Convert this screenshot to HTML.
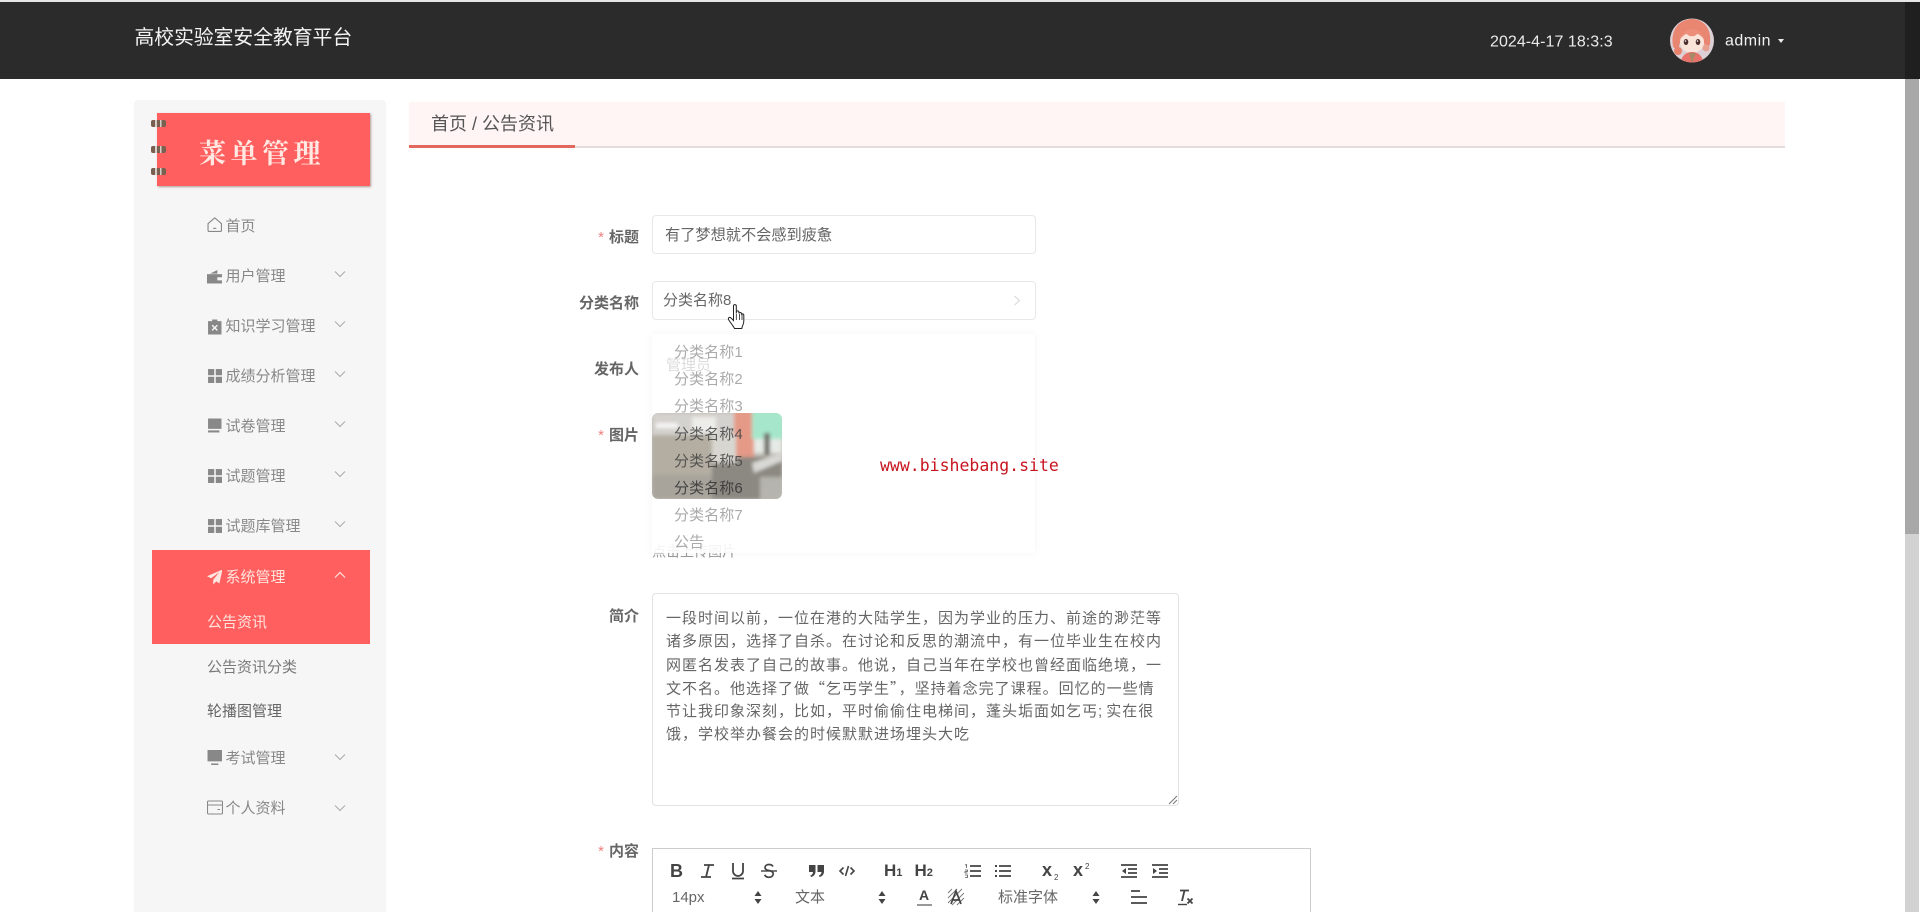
<!DOCTYPE html>
<html lang="zh-CN">
<head>
<meta charset="utf-8">
<title>高校实验室安全教育平台</title>
<style>
*{box-sizing:border-box;margin:0;padding:0}
html,body{width:1920px;height:912px;overflow:hidden;background:#fff}
body{position:relative;font-family:"Liberation Sans","Noto Sans CJK SC",sans-serif;color:#666}
#w{position:absolute;left:0;top:0;width:1920px;height:912px;overflow:hidden;filter:blur(.35px)}
.a{position:absolute;white-space:nowrap}
.c{transform:translateY(-50%);line-height:1.2}
.hdr{left:0;top:2px;width:1920px;height:77px;background:#2b2b2b}
.topline{left:0;top:0;width:1920px;height:2px;background:#e6e6e6}
.side{left:134px;top:100px;width:252px;height:812px;background:#f6f6f6;border-radius:4px 4px 0 0}
.active{left:152px;top:550px;width:218px;height:94px;background:#ff5f5f}
.m{left:225.500px;font-size:15px;color:#888}
.s{left:207px;font-size:15px;color:#666}
.ic{position:absolute;left:206.500px;width:15.500px;height:15.500px;fill:#888}
.ch{position:absolute;left:334px;width:12px;height:8px;fill:none;stroke:#aaa;stroke-width:1}
.tab{left:409px;top:102px;width:1376px;height:46px;background:#fff5f5;border-bottom:2px solid #e6dcdc}
.tabon{left:409px;top:145px;width:166px;height:3px;background:#e2675c}
.lb{font-size:15px;font-weight:bold;color:#666;right:1281px}
.st{color:#f08080;font-weight:normal;margin-right:5px}
.inp{background:#fff;border:1px solid #e8e8e8;border-radius:4px}
.dd{left:652px;top:334px;width:383px;height:219px;background:rgba(255,255,255,.72);box-shadow:0 0 8px rgba(0,0,0,.05);border-radius:2px}
.di{left:674px;font-size:15px;letter-spacing:.1px;color:#8a8a8a;opacity:.72}
.tl{left:666px;font-size:15px;letter-spacing:1px;color:#666}
.q{font-family:"Noto Sans CJK SC",sans-serif}
.ti{position:absolute;overflow:visible}
.tb{font-size:15px;color:#666}
.x{font:bold 18px/18px 'Liberation Sans',sans-serif;color:#444}
.x span{font-size:8px;font-weight:normal;position:absolute;left:12px}
</style>
</head>
<body>
<div id="w">
<div class="a topline"></div>
<div class="a hdr"></div>
<div class="a c" style="left:134.500px;top:39px;font-size:19.800px;color:#f4f4f4">高校实验室安全教育平台</div>
<div class="a c" style="left:1490px;top:42px;font-size:16px;letter-spacing:.05px;color:#eaeaea">2024-4-17 18:3:3</div>
<svg class="a" style="left:1670px;top:18px" width="44" height="45" viewBox="0 0 44 45">
<defs><clipPath id="av"><circle cx="22" cy="22.500" r="22"/></clipPath></defs>
<g clip-path="url(#av)">
<rect width="44" height="45" fill="#dcd0d6"/>
<path d="M3 28C0 10 11 1 22 1s20 9 18 25c-1 3-3 3-5 2-2-8-6-12-13-12s-12 5-13 13c-2 2-5 2-6-1z" fill="#e88672"/>
<ellipse cx="22" cy="24" rx="12" ry="11" fill="#fae4da"/>
<path d="M10 21c3-7 7-10 12-10s9 3 12 10c-3-3-5-5-7-5-2 3-8 3-10 0-2 0-4 2-7 5z" fill="#ec8e7a"/>
<ellipse cx="16" cy="24" rx="2.300" ry="3" fill="#4a2c2c"/><ellipse cx="28" cy="24" rx="2.300" ry="3" fill="#4a2c2c"/>
<circle cx="15.500" cy="23" r=".8" fill="#fff"/><circle cx="27.500" cy="23" r=".8" fill="#fff"/>
<path d="M11 45c0-7 5-11 11-11s11 4 11 11z" fill="#e8736a"/>
<path d="M19 35l3 10 4-10z" fill="#a88a66"/>
<circle cx="8" cy="33" r="4" fill="#e8826e"/><circle cx="36" cy="30" r="3.500" fill="#e8a090"/>
</g></svg>
<div class="a c" style="left:1725px;top:41px;font-size:16px;letter-spacing:.5px;color:#f0f0f0">admin</div>
<div class="a" style="left:1778px;top:39px;width:0;height:0;border-left:3.500px solid transparent;border-right:3.500px solid transparent;border-top:4px solid #eee"></div>

<!-- scrollbar -->
<div class="a" style="left:1905px;top:2px;width:15px;height:77px;background:#1f1f1f"></div>
<div class="a" style="left:1905px;top:79px;width:14px;height:455px;background:#a8a8a8"></div>
<div class="a" style="left:1905px;top:534px;width:14px;height:378px;background:#d2d2d2"></div>

<!-- sidebar -->
<div class="a side"></div>
<div class="a" style="left:157px;top:113px;width:213px;height:73px;background:#ff5f5f;box-shadow:1px 1px 2px rgba(120,80,80,.55)"></div>
<svg class="a" style="left:150px;top:117px" width="18" height="60" viewBox="0 0 18 60">
<g fill="#7a6050"><rect x="1" y="3" width="15" height="7" rx="2"/><rect x="1" y="29" width="15" height="7" rx="2"/><rect x="1" y="51" width="15" height="7" rx="2"/></g>
<g fill="#d8cfc8"><rect x="5" y="3" width="2" height="7"/><rect x="5" y="29" width="2" height="7"/><rect x="5" y="51" width="2" height="7"/><rect x="10" y="3" width="1.500" height="7"/><rect x="10" y="29" width="1.500" height="7"/><rect x="10" y="51" width="1.500" height="7"/></g>
</svg>
<div class="a c" style="left:199px;top:152px;font-size:27px;font-weight:bold;letter-spacing:4.500px;color:#ffe9e2;font-family:'Noto Serif CJK SC','Liberation Serif',serif">菜单管理</div>

<svg class="ic" style="top:217px;fill:none;stroke:#888;stroke-width:1.100" viewBox="0 0 15 15"><path d="M1 6.500L7.500 .8 14 6.500V13a1 1 0 0 1-1 1H2a1 1 0 0 1-1-1z"/><path d="M6 11h3"/></svg>
<div class="a c m" style="top:227px">首页</div>

<svg class="ic" style="top:269px" viewBox="0 0 15 15"><path d="M0 5h15v9H0z"/><path d="M3 4.500L10 1v3.500z"/><rect x="10" y="8" width="5" height="3" fill="#f6f6f6"/></svg>
<div class="a c m" style="top:277px">用户管理</div>
<svg class="ch" style="top:270px" viewBox="0 0 12 8"><path d="M1 1.500l5 5 5-5"/></svg>

<svg class="ic" style="top:319px" viewBox="0 0 15 15"><path d="M1 2h4V.5h5V2h4v13H1z"/><path d="M5 6l5 5M10 6l-5 5" stroke="#f6f6f6" stroke-width="1.400"/></svg>
<div class="a c m" style="top:327px">知识学习管理</div>
<svg class="ch" style="top:320px" viewBox="0 0 12 8"><path d="M1 1.500l5 5 5-5"/></svg>

<svg class="ic" style="top:368px" viewBox="0 0 15 15"><rect x="1" y="1" width="6" height="6"/><rect x="8.500" y="1" width="6" height="6"/><rect x="1" y="8.500" width="6" height="6"/><rect x="8.500" y="8.500" width="6" height="6"/></svg>
<div class="a c m" style="top:377px">成绩分析管理</div>
<svg class="ch" style="top:370px" viewBox="0 0 12 8"><path d="M1 1.500l5 5 5-5"/></svg>

<svg class="ic" style="top:418px" viewBox="0 0 15 15"><path d="M1 .5h13v10H1z"/><path d="M1 12h11v2H1z"/></svg>
<div class="a c m" style="top:427px">试卷管理</div>
<svg class="ch" style="top:420px" viewBox="0 0 12 8"><path d="M1 1.500l5 5 5-5"/></svg>

<svg class="ic" style="top:468px" viewBox="0 0 15 15"><rect x="1" y="1" width="6" height="6"/><rect x="8.500" y="1" width="6" height="6"/><rect x="1" y="8.500" width="6" height="6"/><rect x="8.500" y="8.500" width="6" height="6"/></svg>
<div class="a c m" style="top:477px">试题管理</div>
<svg class="ch" style="top:470px" viewBox="0 0 12 8"><path d="M1 1.500l5 5 5-5"/></svg>

<svg class="ic" style="top:518px" viewBox="0 0 15 15"><rect x="1" y="1" width="6" height="6"/><rect x="8.500" y="1" width="6" height="6"/><rect x="1" y="8.500" width="6" height="6"/><rect x="8.500" y="8.500" width="6" height="6"/></svg>
<div class="a c m" style="top:527px">试题库管理</div>
<svg class="ch" style="top:520px" viewBox="0 0 12 8"><path d="M1 1.500l5 5 5-5"/></svg>

<div class="a active"></div>
<svg class="ic" style="top:569px;fill:#ffe6e0" viewBox="0 0 15 15"><path d="M15 .5L0 7l4 2 8-6-6 7.500V15l3-3 3 2z"/></svg>
<div class="a c m" style="top:577.500px;color:#ffe3dc">系统管理</div>
<svg class="ch" style="top:571px;stroke:#ffe3dc;stroke-width:1.200" viewBox="0 0 12 8"><path d="M1 6.500l5-5 5 5"/></svg>
<div class="a c s" style="top:623px;color:#ffe3dc">公告资讯</div>
<div class="a c s" style="top:667.500px;color:#7a7a7a">公告资讯分类</div>
<div class="a c s" style="top:711.500px">轮播图管理</div>

<svg class="ic" style="top:750px" viewBox="0 0 15 15"><path d="M.5 0h14v11H.5z"/><path d="M4 13h7v1.500H4z"/></svg>
<div class="a c m" style="top:759px">考试管理</div>
<svg class="ch" style="top:753px" viewBox="0 0 12 8"><path d="M1 1.500l5 5 5-5"/></svg>

<svg class="ic" style="top:800px;width:16px;height:15px;fill:none;stroke:#888;stroke-width:1.100" viewBox="0 0 16 15"><rect x=".5" y="1" width="15" height="13" rx="1"/><path d="M.5 5h15M10.500 9.500h2.500"/></svg>
<div class="a c m" style="top:809px">个人资料</div>
<svg class="ch" style="top:804px" viewBox="0 0 12 8"><path d="M1 1.500l5 5 5-5"/></svg>

<!-- tab -->
<div class="a tab"></div>
<div class="a tabon"></div>
<div class="a c" style="left:431px;top:125px;font-size:18px;color:#555">首页 / 公告资讯</div>

<!-- form -->
<div class="a c lb" style="top:238px"><span class="st">*</span>标题</div>
<div class="a inp" style="left:652px;top:215px;width:384px;height:39px"></div>
<div class="a c" style="left:665px;top:236px;font-size:15.200px;color:#666">有了梦想就不会感到疲惫</div>

<div class="a c lb" style="top:304px">分类名称</div>
<div class="a inp" style="left:652px;top:281px;width:384px;height:39px"></div>
<div class="a c" style="left:663px;top:301px;font-size:15px;color:#666">分类名称8</div>
<svg class="a" style="left:1013px;top:295px" width="8" height="11" viewBox="0 0 8 11"><path d="M1.500 1l5 4.500-5 4.500" fill="none" stroke="#ddd" stroke-width="1.200"/></svg>

<div class="a c lb" style="top:370px">发布人</div>

<div class="a c lb" style="top:436px"><span class="st">*</span>图片</div>
<div class="a c" style="left:652px;top:552px;font-size:14px;color:#999">点击上传图片</div>

<!-- dropdown -->
<div class="a dd"></div>
<div class="a" style="left:652px;top:545px;width:383px;height:8px;background:rgba(255,255,255,.6)"></div>
<div class="a c" style="left:666px;top:366px;font-size:15px;color:#dcdcdc">管理员</div>
<svg class="a" style="left:652px;top:413px;border-radius:6px" width="130" height="86" viewBox="0 0 130 86">
<defs><filter id="b" x="-20%" y="-20%" width="140%" height="140%"><feGaussianBlur stdDeviation="1.800"/></filter><clipPath id="ph"><rect width="130" height="86" rx="6"/></clipPath></defs>
<g clip-path="url(#ph)"><rect width="130" height="86" fill="#c0bcb4"/>
<g filter="url(#b)">
<rect x="0" y="0" width="85" height="22" fill="#d4d2ce"/>
<rect x="4" y="10" width="22" height="5" fill="#f6f6f6"/>
<rect x="40" y="4" width="24" height="16" fill="#ecece8"/>
<rect x="82" y="-2" width="20" height="46" fill="#e49a86"/>
<rect x="100" y="-2" width="32" height="28" fill="#a6e6ca"/>
<rect x="102" y="26" width="28" height="14" fill="#e6eae6"/>
<rect x="0" y="22" width="60" height="64" fill="#b4aea2"/>
<rect x="60" y="44" width="70" height="42" fill="#8c8882"/>
<rect x="60" y="22" width="24" height="28" fill="#d8d6d0"/>
<rect x="0" y="62" width="60" height="24" fill="#a8a49c"/>
<path d="M100 50L130 40v8L102 60z" fill="#d8d8d4"/>
<rect x="108" y="64" width="22" height="22" fill="#b6b4ae"/>
<rect x="112" y="20" width="6" height="22" fill="#75736e"/>
</g></g></svg>
<div class="a c di" style="top:353px">分类名称1</div>
<div class="a c di" style="top:380px">分类名称2</div>
<div class="a c di" style="top:407px">分类名称3</div>
<div class="a c di" style="top:435px;color:#444;opacity:.85">分类名称4</div>
<div class="a c di" style="top:462px;color:#444;opacity:.85">分类名称5</div>
<div class="a c di" style="top:489px;color:#333;opacity:.85">分类名称6</div>
<div class="a c di" style="top:516px">分类名称7</div>
<div class="a c di" style="top:543px">公告</div>

<div class="a c" style="left:880px;top:466px;font-family:'DejaVu Sans Mono','Liberation Mono',monospace;font-size:16.500px;color:#c8141e">www.bishebang.site</div>

<!-- hand cursor -->
<svg class="a" style="left:727px;top:304px" width="20" height="26" viewBox="0 0 20 26">
<path d="M6.500 2c0-1.800 2.800-1.800 2.800 0v7.500l.1-1.500c0-1.500 2.500-1.500 2.500 0l.1 1.500c0-1.400 2.400-1.400 2.400 0l.1 1.200c.2-1.200 2.300-1.200 2.300.4v6c0 3-1.500 4.300-2 7.400H7.500C6.500 22 4 19.500 1.800 16c-1.300-2.200.8-3.500 2.200-2l2.500 2.500z" fill="#fff" stroke="#222" stroke-width="1"/>
<path d="M9.300 10v6M12.500 10v6M15 10.500V16" stroke="#222" stroke-width=".8" fill="none"/>
</svg>

<!-- summary -->
<div class="a c lb" style="top:617px">简介</div>
<div class="a inp" style="left:652px;top:593px;width:527px;height:213px;border-color:#e2e2e2"></div>
<div class="a c tl" style="top:618.500px">一段时间以前，一位在港的大陆学生，因为学业的压力、前途的渺茫等</div>
<div class="a c tl" style="top:642px">诸多原因，选择了自杀。在讨论和反思的潮流中，有一位毕业生在校内</div>
<div class="a c tl" style="top:665.500px">网匿名发表了自己的故事。他说，自己当年在学校也曾经面临绝境，一</div>
<div class="a c tl" style="top:689px">文不名。他选择了做<span class="q">“</span>乞丐学生<span class="q">”</span>，坚持着念完了课程。回忆的一些情</div>
<div class="a c tl" style="top:712px">节让我印象深刻，比如，平时偷偷住电梯间，蓬头垢面如乞丐<span style="letter-spacing:4px">;</span>实在很</div>
<div class="a c tl" style="top:735px">饿，学校举办餐会的时候默默进场埋头大吃</div>
<svg class="a" style="left:1168px;top:795px" width="10" height="10" viewBox="0 0 10 10"><path d="M1 9l8-8M5 9l4-4" stroke="#777" stroke-width="1"/></svg>

<!-- editor -->
<div class="a c lb" style="top:852px"><span class="st">*</span>内容</div>
<div class="a" style="left:652px;top:848px;width:659px;height:70px;border:1px solid #ccc;background:#fff"></div>

<div class="a" style="left:670px;top:862px;font:bold 18px/18px 'Liberation Sans',sans-serif;color:#444">B</div>
<svg class="ti" style="left:700px;top:864px" width="15" height="14" viewBox="0 0 15 14"><path d="M4 1h10M1 13h10M9 1L6 13" fill="none" stroke="#444" stroke-width="1.800"/></svg>
<svg class="ti" style="left:731px;top:862px" width="14" height="18" viewBox="0 0 14 18"><path d="M2 1v8a5 5 0 0 0 10 0V1M1 16.500h12" fill="none" stroke="#444" stroke-width="1.800"/></svg>
<svg class="ti" style="left:761px;top:863px" width="16" height="16" viewBox="0 0 16 16"><path d="M12 3.500C11 1.800 9.500 1.500 8 1.500c-2.500 0-4 1.300-4 3 0 1.500 1 2.500 4 3 3 .6 4.200 1.500 4.200 3.400 0 2-1.800 3.400-4.200 3.400-2 0-3.500-.8-4.400-2.500" fill="none" stroke="#444" stroke-width="1.700"/><path d="M0 8h16" stroke="#444" stroke-width="1.400"/></svg>
<svg class="ti" style="left:809px;top:865px" width="15" height="12" viewBox="0 0 15 12"><path d="M0 0h6.500v6.500c0 3-2 5-4.500 5.500l-.6-1.500C3 10 4 8.500 4 7H0zM8.500 0H15v6.500c0 3-2 5-4.500 5.500l-.6-1.500c1.600-.5 2.600-2 2.600-3.500H8.500z" fill="#444"/></svg>
<svg class="ti" style="left:839px;top:865px" width="16" height="12" viewBox="0 0 16 12"><path d="M4.500 2.500L1 6l3.500 3.500M11.500 2.500L15 6l-3.500 3.500M9.500 1L6.500 11" fill="none" stroke="#444" stroke-width="1.600"/></svg>
<div class="a" style="left:884px;top:862px;font:bold 17px/18px 'Liberation Sans',sans-serif;color:#444">H<span style="font-size:11px">1</span></div>
<div class="a" style="left:914.500px;top:862px;font:bold 17px/18px 'Liberation Sans',sans-serif;color:#444">H<span style="font-size:11px">2</span></div>
<svg class="ti" style="left:965px;top:864px" width="16" height="14" viewBox="0 0 16 14"><path d="M5 2h11M5 7h11M5 12h11" stroke="#444" stroke-width="1.800"/><path d="M0 1l1.500-.5V4M0 6h2.500v1.500H0V9h2.500M0 11h2.500v2.500H0" fill="none" stroke="#555" stroke-width=".8"/></svg>
<svg class="ti" style="left:995px;top:864px" width="16" height="14" viewBox="0 0 16 14"><path d="M4 2h12M4 7h12M4 12h12" stroke="#444" stroke-width="1.800"/><path d="M0 2h2M0 7h2M0 12h2" stroke="#444" stroke-width="2"/></svg>
<div class="a x" style="left:1042px;top:861px">x<span style="top:8px">2</span></div>
<div class="a x" style="left:1073px;top:861px">x<span style="top:-3px">2</span></div>
<svg class="ti" style="left:1121px;top:864px" width="16" height="14" viewBox="0 0 16 14"><path d="M0 1h16M7 5h9M7 9h9M0 13h16" stroke="#444" stroke-width="1.800"/><path d="M5 4v6L1 7z" fill="#444"/></svg>
<svg class="ti" style="left:1152px;top:864px" width="16" height="14" viewBox="0 0 16 14"><path d="M0 1h16M7 5h9M7 9h9M0 13h16" stroke="#444" stroke-width="1.800"/><path d="M1 4v6l4-3z" fill="#444"/></svg>

<div class="a c tb" style="left:672px;top:898px;font-size:15px">14px</div>
<svg class="ti" style="left:754px;top:891px" width="8" height="13" viewBox="0 0 8 13"><path d="M4 0l3.500 5H.5zM4 13L.5 8h7z" fill="#444"/></svg>
<div class="a c tb" style="left:795px;top:898px;font-size:15px">文本</div>
<svg class="ti" style="left:878px;top:891px" width="8" height="13" viewBox="0 0 8 13"><path d="M4 0l3.500 5H.5zM4 13L.5 8h7z" fill="#444"/></svg>
<div class="a" style="left:919px;top:887px;font:bold 14px/16px 'Liberation Sans',sans-serif;color:#444">A</div>
<div class="a" style="left:917px;top:904px;width:15px;height:2px;background:#999"></div>
<svg class="ti" style="left:948px;top:889px" width="16" height="16" viewBox="0 0 16 16"><path d="M0 4L4 0M0 9L9 0M0 14L14 0M4 16L16 4M9 16l7-7" stroke="#777" stroke-width=".9"/><path d="M3 15L8 2l5 13M5 11h6" fill="none" stroke="#444" stroke-width="1.700"/></svg>
<div class="a c tb" style="left:998px;top:898px;font-size:15px">标准字体</div>
<svg class="ti" style="left:1092px;top:891px" width="8" height="13" viewBox="0 0 8 13"><path d="M4 0l3.500 5H.5zM4 13L.5 8h7z" fill="#444"/></svg>
<svg class="ti" style="left:1131px;top:890px" width="16" height="14" viewBox="0 0 16 14"><path d="M0 1h9M0 7h16M0 13h16" stroke="#444" stroke-width="1.700"/></svg>
<svg class="ti" style="left:1178px;top:889px" width="16" height="17" viewBox="0 0 16 17"><path d="M2 1.500h9M6.500 1.500L4 12" fill="none" stroke="#444" stroke-width="1.800"/><path d="M0 15.500h9" stroke="#444" stroke-width="1.400"/><path d="M9.500 9.500l5 5M14.500 9.500l-5 5" stroke="#444" stroke-width="1.800"/></svg>
</div>
</body>
</html>
